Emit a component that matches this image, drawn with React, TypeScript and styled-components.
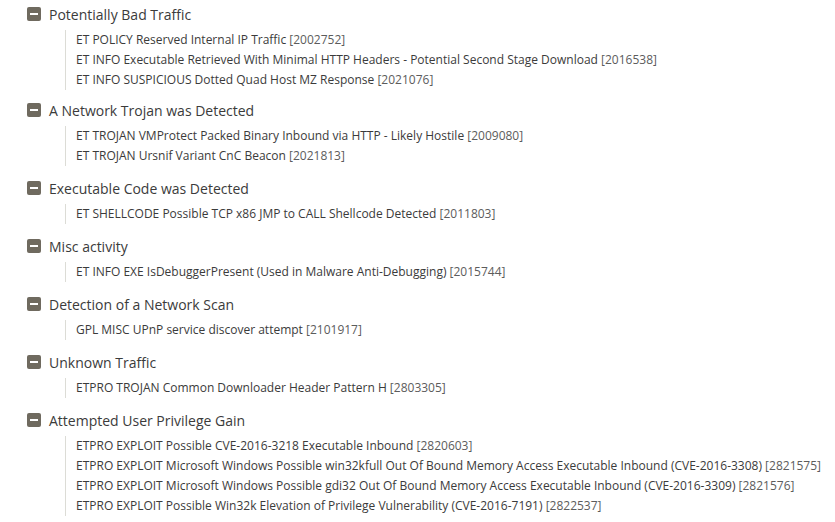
import styled, { createGlobalStyle } from 'styled-components'

interface Rule {
  name: string
  sid: string
}

interface Group {
  title: string
  rules: Rule[]
}

const groups: Group[] = [
  {
    title: 'Potentially Bad Traffic',
    rules: [
      { name: 'ET POLICY Reserved Internal IP Traffic', sid: '2002752' },
      { name: 'ET INFO Executable Retrieved With Minimal HTTP Headers - Potential Second Stage Download', sid: '2016538' },
      { name: 'ET INFO SUSPICIOUS Dotted Quad Host MZ Response', sid: '2021076' }
    ]
  },
  {
    title: 'A Network Trojan was Detected',
    rules: [
      { name: 'ET TROJAN VMProtect Packed Binary Inbound via HTTP - Likely Hostile', sid: '2009080' },
      { name: 'ET TROJAN Ursnif Variant CnC Beacon', sid: '2021813' }
    ]
  },
  {
    title: 'Executable Code was Detected',
    rules: [{ name: 'ET SHELLCODE Possible TCP x86 JMP to CALL Shellcode Detected', sid: '2011803' }]
  },
  {
    title: 'Misc activity',
    rules: [{ name: 'ET INFO EXE IsDebuggerPresent (Used in Malware Anti-Debugging)', sid: '2015744' }]
  },
  {
    title: 'Detection of a Network Scan',
    rules: [{ name: 'GPL MISC UPnP service discover attempt', sid: '2101917' }]
  },
  {
    title: 'Unknown Traffic',
    rules: [{ name: 'ETPRO TROJAN Common Downloader Header Pattern H', sid: '2803305' }]
  },
  {
    title: 'Attempted User Privilege Gain',
    rules: [
      { name: 'ETPRO EXPLOIT Possible CVE-2016-3218 Executable Inbound', sid: '2820603' },
      { name: 'ETPRO EXPLOIT Microsoft Windows Possible win32kfull Out Of Bound Memory Access Executable Inbound (CVE-2016-3308)', sid: '2821575' },
      { name: 'ETPRO EXPLOIT Microsoft Windows Possible gdi32 Out Of Bound Memory Access Executable Inbound (CVE-2016-3309)', sid: '2821576' },
      { name: 'ETPRO EXPLOIT Possible Win32k Elevation of Privilege Vulnerability (CVE-2016-7191)', sid: '2822537' }
    ]
  }
]

export default function App() {
  return (
    <>
      <GlobalStyle />
      <Tree>
        {groups.map((group) => (
          <Section key={group.title}>
            <Header>
              <Toggle aria-label="Collapse">
                <MinusBar />
              </Toggle>
              <Title>{group.title}</Title>
            </Header>
            <Rules>
              {group.rules.map((rule) => (
                <RuleRow key={rule.sid}>
                  {rule.name} <Sid>[{rule.sid}]</Sid>
                </RuleRow>
              ))}
            </Rules>
          </Section>
        ))}
      </Tree>
    </>
  )
}

const GlobalStyle = createGlobalStyle`
  html, body {
    margin: 0;
    padding: 0;
    background: #ffffff;
  }
  body {
    font-family: "Open Sans", "Noto Sans", sans-serif;
    color: #3b3b3b;
  }
`

const Tree = styled.div`
  display: flex;
  flex-direction: column;
  padding: 3px 0 0 27px;
`

const Section = styled.div`
  display: flex;
  flex-direction: column;
  padding-bottom: 11px;

  &:first-child {
    padding-bottom: 9px;
  }
`

const Header = styled.div`
  display: flex;
  align-items: center;
  gap: 8px;
  height: 22px;
`

const Toggle = styled.span`
  width: 14px;
  height: 14px;
  border-radius: 2px;
  background: #6f6a5f;
  display: flex;
  align-items: center;
  justify-content: center;
  flex-shrink: 0;
`

const MinusBar = styled.span`
  width: 8px;
  height: 2px;
  background: #ffffff;
`

const Title = styled.span`
  font-size: 14px;
  color: #3b3b3b;
  white-space: nowrap;
`

const Rules = styled.div`
  display: flex;
  flex-direction: column;
  margin: 5px 0 0 38px;
  padding-left: 10px;
  border-left: 1px solid #dcdcd6;
`

const RuleRow = styled.div`
  font-size: 12px;
  line-height: 20px;
  height: 20px;
  color: #3b3b3b;
  white-space: nowrap;
`

const Sid = styled.span`
  color: #5c5c5c;
`
